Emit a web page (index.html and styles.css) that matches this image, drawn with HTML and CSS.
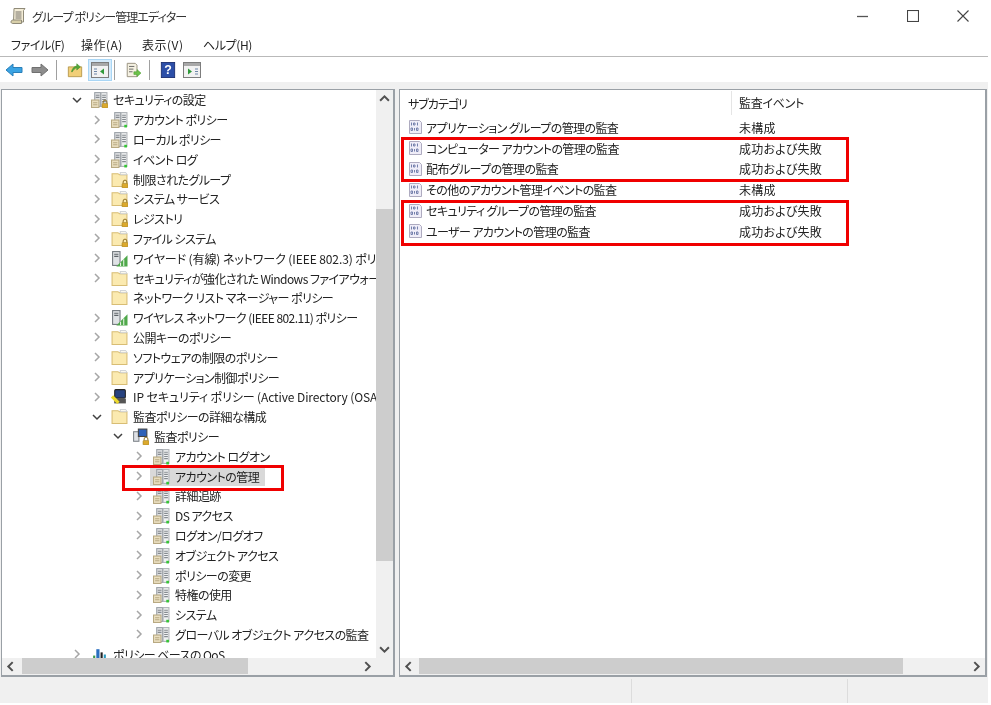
FILE: index.html
```html
<!DOCTYPE html>
<html lang="ja">
<head>
    <meta charset="UTF-8">
    <title>グループ ポリシー管理エディター</title>
    <link rel="stylesheet" href="styles.css">
</head>
<body>

    <!-- Shared icons -->
    <svg class="icon-defs" aria-hidden="true">
        <symbol id="chev-right" viewBox="0 0 10 10"><path d="M3 1l4 4-4 4" fill="none" stroke="#a6a6a6" stroke-width="1.5"/></symbol>
        <symbol id="chev-down" viewBox="0 0 10 10"><path d="M1 3l4 4 4-4" fill="none" stroke="#404040" stroke-width="1.5"/></symbol>
        <symbol id="policy" viewBox="0 0 16 16">
            <rect x="3.500" y="1.500" width="5.500" height="13" fill="#dfe1e3" stroke="#9aa0a6"/>
            <rect x="9.500" y="1.500" width="5.500" height="13" fill="#eef0f1" stroke="#aeb2b6"/>
            <path d="M4.500 4h3.500M4.500 6h3.500M10.500 4h3.500M10.500 6h3.500M10.500 8h3.500M10.500 10h3.500" stroke="#868b90"/>
            <rect x=".5" y="8.500" width="7" height="7" fill="#eadfc0" stroke="#b8a982"/>
            <path d="M2 11h4M2 13h4" stroke="#b8a982"/>
            <rect x="12.500" y="13" width="2.500" height="2.500" fill="#35c435"/>
        </symbol>
        <symbol id="folder" viewBox="0 0 16 16">
            <path d="M1 14.500v-12h5.500l1.500 1h7v11z" fill="#fbeab0" stroke="#d8bd74"/>
            <path d="M8.500 1.500h5.500l1 2h-6z" fill="#fffdf4" stroke="#c4c7cc" stroke-width=".8"/>
        </symbol>
        <symbol id="lock" viewBox="0 0 16 16">
            <path d="M9.500 10V8a2.500 2.500 0 0 1 5 0v2" fill="none" stroke="#8c6d1f" stroke-width="1.300"/>
            <rect x="8" y="10" width="8" height="6" rx="1" fill="#dba92e" stroke="#9c7a22" stroke-width=".7"/>
        </symbol>
        <symbol id="audit" viewBox="0 0 16 16">
            <path d="M1.500 1.500h10l2 2v11h-12z" fill="#efedf8" stroke="#aeabc0"/>
            <path d="M3.500 3.500v3M5.500 4H7v2H5.500zM9.500 3.500v3M3 9h1.500v2.500H3zM6.500 9v2.500M8.500 9H10v2.500H8.500z" fill="none" stroke="#7480ac"/>
        </symbol>
        <symbol id="wireless" viewBox="0 0 16 16">
            <rect x="1.500" y="1.500" width="7" height="13" fill="#dfe2e5" stroke="#6f757b"/>
            <path d="M3 4h4M3 6h4" stroke="#5f656a"/>
            <path d="M5 15.500L15.500 5v10.500z" fill="#4fa84a"/>
            <path d="M9 15v-3M12 15V9" stroke="#e8f4e4"/>
        </symbol>
    </svg>

    <div class="window">

        <!-- Title bar -->
        <header class="titlebar">
            <svg class="app-icon" viewBox="0 0 18 18">
                <path d="M5 1.500h11l-1.500 2v11.500h-10z" fill="#f3ecd6" stroke="#8f8a78"/>
                <path d="M2 15c0-1.500 1-2 2.500-2h8v3.500H4c-1 0-2-.5-2-1.500z" fill="#d8cfa9" stroke="#8f8a78"/>
                <path d="M6.500 5h6M6.500 7h6M6.500 9h6M6.500 11h6" stroke="#77736a"/>
            </svg>
            <span class="title-text">グループ ポリシー管理エディター</span>
            <div class="window-btns">
                <svg viewBox="0 0 12 12"><path d="M0 6.500h11" stroke="#555" stroke-width="1.300"/></svg>
                <svg viewBox="0 0 12 12"><rect x=".5" y=".5" width="11" height="11" fill="none" stroke="#444" stroke-width="1.100"/></svg>
                <svg viewBox="0 0 12 12"><path d="M.5.500l11 11M11.500.500l-11 11" stroke="#444" stroke-width="1.100"/></svg>
            </div>
        </header>

        <!-- Menu -->
        <nav class="menubar">
            <span>ファイル(F)</span>
            <span class="menu-wide">操作(A)</span>
            <span class="menu-wide">表示(V)</span>
            <span>ヘルプ(H)</span>
        </nav>

        <!-- Toolbar -->
        <div class="toolbar">
            <span class="tool"><svg viewBox="0 0 18 14"><path d="M8 1L1 7l7 6V9.500h9v-5H8z" fill="#3aa3e3" stroke="#2a7fb8"/></svg></span>
            <span class="tool"><svg viewBox="0 0 18 14"><path d="M10 1l7 6-7 6V9.500H1v-5h9z" fill="#8d8d8d" stroke="#707070"/></svg></span>
            <span class="tool-sep"></span>
            <span class="tool"><svg viewBox="0 0 18 18"><path d="M1.500 16.500v-11h15v11z" fill="#f1cf78" stroke="#b5964a"/><path d="M5 11c1-4 3-6 6-6.500V2l4 3.500-4 3.500V6.500C9 7 7 9 6 11z" fill="#53a83a" stroke="#3c8a28" stroke-width=".6"/></svg></span>
            <span class="tool tool-on"><svg viewBox="0 0 18 16"><rect x=".5" y=".5" width="17" height="15" fill="#f2f2f2" stroke="#7d7d7d"/><rect x="1" y="1" width="16" height="3" fill="#a8a8a8"/><path d="M3 7h3M3 9.500h3M3 12h3" stroke="#6c86a8"/><path d="M13 6.500v6L9 9.500z" fill="#2f9a3a"/></svg></span>
            <span class="tool-sep"></span>
            <span class="tool"><svg viewBox="0 0 18 18"><path d="M2.500 1.500h9l2 2v13h-11z" fill="#f5f1e2" stroke="#908a78"/><path d="M4.500 5h6M4.500 8h5M4.500 11h4" stroke="#5c5c5c"/><path d="M10 11h3.500V8.500L18 12.500l-4.500 4V14H10z" fill="#6cc24a" stroke="#4b9a30" stroke-width=".6"/></svg></span>
            <span class="tool-sep"></span>
            <span class="tool tool-help"><svg viewBox="0 0 16 18"><rect x=".5" y=".5" width="15" height="17" fill="#2c4fa8" stroke="#1b2f70"/><text x="8" y="14" class="help-mark">?</text></svg></span>
            <span class="tool"><svg viewBox="0 0 18 16"><rect x=".5" y=".5" width="17" height="15" fill="#f2f2f2" stroke="#7d7d7d"/><rect x="1" y="1" width="16" height="3" fill="#a8a8a8"/><path d="M12 7h3M12 9.500h3M12 12h3" stroke="#6c86a8"/><path d="M5 6.500v6L9 9.500z" fill="#2f9a3a"/></svg></span>
        </div>

        <div class="strip"></div>

        <!-- Panes -->
        <main class="panes">

            <section class="pane tree-pane">
                <div class="pane-body">
                    <ul class="tree">
                        <li class="row lv0"><svg class="chev"><use href="#chev-down"/></svg><span class="ico"><svg><use href="#policy"/></svg><svg><use href="#lock"/></svg></span><span>セキュリティの設定</span></li>
                        <li class="row lv1"><svg class="chev"><use href="#chev-right"/></svg><span class="ico"><svg><use href="#policy"/></svg></span><span>アカウント ポリシー</span></li>
                        <li class="row lv1"><svg class="chev"><use href="#chev-right"/></svg><span class="ico"><svg><use href="#policy"/></svg></span><span>ローカル ポリシー</span></li>
                        <li class="row lv1"><svg class="chev"><use href="#chev-right"/></svg><span class="ico"><svg><use href="#policy"/></svg></span><span>イベント ログ</span></li>
                        <li class="row lv1"><svg class="chev"><use href="#chev-right"/></svg><span class="ico"><svg><use href="#folder"/></svg><svg><use href="#lock"/></svg></span><span>制限されたグループ</span></li>
                        <li class="row lv1"><svg class="chev"><use href="#chev-right"/></svg><span class="ico"><svg><use href="#folder"/></svg><svg><use href="#lock"/></svg></span><span>システム サービス</span></li>
                        <li class="row lv1"><svg class="chev"><use href="#chev-right"/></svg><span class="ico"><svg><use href="#folder"/></svg><svg><use href="#lock"/></svg></span><span>レジストリ</span></li>
                        <li class="row lv1"><svg class="chev"><use href="#chev-right"/></svg><span class="ico"><svg><use href="#folder"/></svg><svg><use href="#lock"/></svg></span><span>ファイル システム</span></li>
                        <li class="row lv1 row-wide"><svg class="chev"><use href="#chev-right"/></svg><span class="ico"><svg><use href="#wireless"/></svg></span><span>ワイヤード (有線) ネットワーク (IEEE 802.3) ポリシー</span></li>
                        <li class="row lv1"><svg class="chev"><use href="#chev-right"/></svg><span class="ico"><svg><use href="#folder"/></svg></span><span>セキュリティが強化された Windows ファイアウォール</span></li>
                        <li class="row lv1"><span class="chev"></span><span class="ico"><svg><use href="#folder"/></svg></span><span>ネットワーク リスト マネージャー ポリシー</span></li>
                        <li class="row lv1"><svg class="chev"><use href="#chev-right"/></svg><span class="ico"><svg><use href="#wireless"/></svg></span><span>ワイヤレス ネットワーク (IEEE 802.11) ポリシー</span></li>
                        <li class="row lv1"><svg class="chev"><use href="#chev-right"/></svg><span class="ico"><svg><use href="#folder"/></svg></span><span>公開キーのポリシー</span></li>
                        <li class="row lv1"><svg class="chev"><use href="#chev-right"/></svg><span class="ico"><svg><use href="#folder"/></svg></span><span>ソフトウェアの制限のポリシー</span></li>
                        <li class="row lv1"><svg class="chev"><use href="#chev-right"/></svg><span class="ico"><svg><use href="#folder"/></svg></span><span>アプリケーション制御ポリシー</span></li>
                        <li class="row lv1 row-wide"><svg class="chev"><use href="#chev-right"/></svg><span class="ico"><svg viewBox="0 0 16 16"><rect x="3.500" y="1.500" width="10" height="8" rx="1" fill="#27427f" stroke="#222"/><rect x="3" y="10" width="11" height="4.500" fill="#555"/><path d="M1 8l6 6" stroke="#ecd92f" stroke-width="3"/></svg></span><span>IP セキュリティ ポリシー (Active Directory (OSA</span></li>
                        <li class="row lv1"><svg class="chev"><use href="#chev-down"/></svg><span class="ico"><svg><use href="#folder"/></svg></span><span>監査ポリシーの詳細な構成</span></li>
                        <li class="row lv2"><svg class="chev"><use href="#chev-down"/></svg><span class="ico"><svg viewBox="0 0 16 16"><rect x="1.500" y="3.500" width="5" height="9" fill="#dfe2e6" stroke="#7d8389"/><rect x="6" y="1" width="8" height="7" fill="#2f62b8" stroke="#444"/></svg><svg><use href="#lock"/></svg></span><span>監査ポリシー</span></li>
                        <li class="row lv3"><svg class="chev"><use href="#chev-right"/></svg><span class="ico"><svg><use href="#policy"/></svg></span><span>アカウント ログオン</span></li>
                        <li class="row lv3"><svg class="chev"><use href="#chev-right"/></svg><span class="picked"><span class="ico"><svg><use href="#policy"/></svg></span><span>アカウントの管理</span></span></li>
                        <li class="row lv3"><svg class="chev"><use href="#chev-right"/></svg><span class="ico"><svg><use href="#policy"/></svg></span><span>詳細追跡</span></li>
                        <li class="row lv3"><svg class="chev"><use href="#chev-right"/></svg><span class="ico"><svg><use href="#policy"/></svg></span><span>DS アクセス</span></li>
                        <li class="row lv3"><svg class="chev"><use href="#chev-right"/></svg><span class="ico"><svg><use href="#policy"/></svg></span><span>ログオン/ログオフ</span></li>
                        <li class="row lv3"><svg class="chev"><use href="#chev-right"/></svg><span class="ico"><svg><use href="#policy"/></svg></span><span>オブジェクト アクセス</span></li>
                        <li class="row lv3"><svg class="chev"><use href="#chev-right"/></svg><span class="ico"><svg><use href="#policy"/></svg></span><span>ポリシーの変更</span></li>
                        <li class="row lv3"><svg class="chev"><use href="#chev-right"/></svg><span class="ico"><svg><use href="#policy"/></svg></span><span>特権の使用</span></li>
                        <li class="row lv3"><svg class="chev"><use href="#chev-right"/></svg><span class="ico"><svg><use href="#policy"/></svg></span><span>システム</span></li>
                        <li class="row lv3"><svg class="chev"><use href="#chev-right"/></svg><span class="ico"><svg><use href="#policy"/></svg></span><span>グローバル オブジェクト アクセスの監査</span></li>
                        <li class="row lv0"><svg class="chev"><use href="#chev-right"/></svg><span class="ico"><svg viewBox="0 0 16 16"><path d="M2 15V9h2v6z" fill="#3a9a4a"/><path d="M5 15V3h3v12z" fill="#2a6fc0"/><path d="M9 15V6h2v9z" fill="#222"/><path d="M12 15V8h2v7z" fill="#2a9ac0"/></svg></span><span>ポリシー ベースの QoS</span></li>
                    </ul>
                    <div class="vbar">
                        <svg class="arrow" viewBox="0 0 10 10"><path d="M1 7l4-4 4 4" fill="none" stroke="#505050" stroke-width="1.800"/></svg>
                        <div class="vtrack"><div class="vthumb"></div></div>
                        <svg class="arrow" viewBox="0 0 10 10"><path d="M1 3l4 4 4-4" fill="none" stroke="#505050" stroke-width="1.800"/></svg>
                    </div>
                </div>
                <div class="hbar">
                    <svg class="arrow" viewBox="0 0 10 10"><path d="M7 1L3 5l4 4" fill="none" stroke="#505050" stroke-width="1.800"/></svg>
                    <div class="htrack"><div class="hthumb thumb-left"></div></div>
                    <svg class="arrow" viewBox="0 0 10 10"><path d="M3 1l4 4-4 4" fill="none" stroke="#505050" stroke-width="1.800"/></svg>
                    <span class="corner"></span>
                </div>
            </section>

            <section class="pane list-pane">
                <div class="pane-body list-body">
                    <div class="list-head">
                        <span class="col-name">サブカテゴリ</span>
                        <span class="col-event">監査イベント</span>
                    </div>
                    <ul class="list">
                        <li class="item"><span class="col-name"><svg class="ico-audit"><use href="#audit"/></svg>アプリケーション グループの管理の監査</span><span class="col-event">未構成</span></li>
                        <li class="item"><span class="col-name"><svg class="ico-audit"><use href="#audit"/></svg>コンピューター アカウントの管理の監査</span><span class="col-event">成功および失敗</span></li>
                        <li class="item"><span class="col-name"><svg class="ico-audit"><use href="#audit"/></svg>配布グループの管理の監査</span><span class="col-event">成功および失敗</span></li>
                        <li class="item"><span class="col-name"><svg class="ico-audit"><use href="#audit"/></svg>その他のアカウント管理イベントの監査</span><span class="col-event">未構成</span></li>
                        <li class="item"><span class="col-name"><svg class="ico-audit"><use href="#audit"/></svg>セキュリティ グループの管理の監査</span><span class="col-event">成功および失敗</span></li>
                        <li class="item"><span class="col-name"><svg class="ico-audit"><use href="#audit"/></svg>ユーザー アカウントの管理の監査</span><span class="col-event">成功および失敗</span></li>
                    </ul>
                </div>
                <div class="hbar">
                    <svg class="arrow" viewBox="0 0 10 10"><path d="M7 1L3 5l4 4" fill="none" stroke="#505050" stroke-width="1.800"/></svg>
                    <div class="htrack"><div class="hthumb thumb-right"></div></div>
                    <svg class="arrow" viewBox="0 0 10 10"><path d="M3 1l4 4-4 4" fill="none" stroke="#505050" stroke-width="1.800"/></svg>
                </div>
            </section>
        </main>

        <!-- Status bar -->
        <footer class="statusbar">
            <span class="status-a"></span>
            <span class="status-b"></span>
            <span class="status-c"></span>
        </footer>
    </div>

    <!-- Red annotation boxes -->
    <div class="mark mark-tree"></div>
    <div class="mark mark-list1"></div>
    <div class="mark mark-list2"></div>

</body>
</html>
```

FILE: styles.css
```css
/* Page */
body {
    margin: 0;
    width: 991px;
    height: 705px;
    overflow: hidden;
    background-color: white;
    color: #222;
    font-family: "Noto Sans CJK JP", "Noto Sans", sans-serif;
    font-size: 12px;
    font-feature-settings: "palt";
    position: relative;
}
ul {
    list-style: none;
    margin: 0;
    padding: 0;
}
.icon-defs {
    position: absolute;
    width: 0;
    height: 0;
}
.window {
    width: 988px;
    height: 703px;
    display: flex;
    flex-direction: column;
    background-color: white;
    filter: blur(0.35px);
}

/* Title bar */
.titlebar {
    height: 32px;
    display: flex;
    align-items: center;
    padding-left: 9px;
    flex: none;
}
.app-icon {
    width: 18px;
    height: 18px;
    margin-right: 5px;
}
.title-text {
    color: #333;
    letter-spacing: -0.9px;
}
.window-btns {
    margin-left: auto;
    display: flex;
    gap: 38px;
    padding-right: 19px;
}
.window-btns svg {
    width: 12px;
    height: 12px;
}

/* Menu */
.menubar {
    height: 24px;
    flex: none;
    display: grid;
    grid-template-columns: 70px 61px 61px 60px;
    align-items: center;
    padding-left: 11px;
    border-bottom: 1px solid #b9b9b9;
    letter-spacing: -0.4px;
}
.menu-wide {
    letter-spacing: 0.5px;
}

/* Toolbar */
.toolbar {
    height: 25px;
    flex: none;
    display: flex;
    align-items: center;
    padding-left: 5px;
    padding-top: 1px;
    box-sizing: border-box;
}
.tool {
    display: flex;
    align-items: center;
    justify-content: center;
    width: 18px;
    height: 22px;
    margin-right: 8px;
}
.tool svg {
    width: 18px;
    height: 16px;
}
.tool-on {
    width: 24px;
    background-color: #d5ebfb;
    box-shadow: inset 0 0 0 1px #a9d6f5;
    margin-right: 3px;
    margin-left: -4px;
}
.tool-help {
    margin-right: 6px;
}
.tool-sep {
    width: 1px;
    height: 20px;
    background-color: #a0a0a0;
    margin: 0 9px 0 -1px;
}
.help-mark {
    fill: white;
    font-size: 14px;
    font-weight: bold;
    font-family: "Liberation Sans", sans-serif;
    text-anchor: middle;
}
.strip {
    height: 7px;
    flex: none;
    background-color: #f0f0f0;
}

/* Panes */
.panes {
    height: 588px;
    flex: none;
    display: flex;
    gap: 4px;
    padding-left: 1px;
    background-color: #f0f0f0;
}
.pane {
    display: flex;
    flex-direction: column;
    background-color: white;
    border: 1px solid #9aa0a6;
    border-bottom-width: 2px;
    border-right-width: 2px;
    box-sizing: border-box;
}
.tree-pane {
    width: 394px;
}
.list-pane {
    width: 588px;
}
.pane-body {
    flex: 1;
    display: flex;
    min-height: 0;
    overflow: hidden;
}

/* Tree */
.tree {
    flex: 1;
    min-width: 0;
    overflow: hidden;
    letter-spacing: -0.55px;
}
.row {
    height: 19.8px;
    display: flex;
    align-items: center;
    white-space: nowrap;
}
.row-wide {
    letter-spacing: -0.1px;
}
.lv0 { padding-left: 70px; }
.lv1 { padding-left: 90px; }
.lv2 { padding-left: 111px; }
.lv3 { padding-left: 132px; }
.chev {
    width: 10px;
    height: 10px;
    flex: none;
    margin-right: 9px;
}
.ico {
    width: 17px;
    height: 17px;
    flex: none;
    position: relative;
    margin-right: 5px;
}
.ico svg {
    width: 17px;
    height: 17px;
    display: block;
}
.ico svg + svg {
    position: absolute;
    left: 5px;
    top: 5px;
    width: 12px;
    height: 12px;
}
.picked {
    display: flex;
    align-items: center;
    height: 100%;
    background-color: #d9d9d9;
    padding-right: 6px;
    margin-left: -3px;
    padding-left: 3px;
}

/* Scrollbars */
.vbar {
    width: 17px;
    flex: none;
    background-color: #f0f0f0;
    display: flex;
    flex-direction: column;
}
.vtrack {
    flex: 1;
}
.vthumb {
    margin-top: 102px;
    height: 352px;
    background-color: #cdcdcd;
}
.arrow {
    width: 17px;
    height: 17px;
    flex: none;
    padding: 3px;
    box-sizing: border-box;
}
.hbar {
    height: 17px;
    flex: none;
    display: flex;
    background-color: #f0f0f0;
}
.htrack {
    flex: 1;
    min-width: 0;
}
.hthumb {
    height: 16px;
    background-color: #cdcdcd;
}
.thumb-left {
    width: 226px;
    margin-left: 3px;
}
.thumb-right {
    width: 484px;
    margin-left: 2px;
}
.corner {
    width: 17px;
    flex: none;
}

/* List */
.list-body {
    flex-direction: column;
}
.list-head {
    height: 26px;
    flex: none;
    display: flex;
    align-items: center;
}
.list-head .col-name {
    padding-left: 8px;
    letter-spacing: -1px;
}
.list-head .col-event {
    border-left: 1px solid #e5e5e5;
    line-height: 24px;
    padding-left: 7px;
    letter-spacing: -0.3px;
}
.list {
    padding-top: 1px;
}
.item {
    height: 20.8px;
    display: flex;
    align-items: center;
}
.col-name {
    width: 331px;
    flex: none;
    display: flex;
    align-items: center;
    padding-left: 8px;
    box-sizing: border-box;
    letter-spacing: -0.6px;
}
.col-event {
    padding-left: 8px;
    letter-spacing: 0.2px;
}
.ico-audit {
    width: 16px;
    height: 16px;
    margin-right: 2px;
    flex: none;
}

/* Status bar */
.statusbar {
    flex: 1;
    display: flex;
    background-color: #f0f0f0;
    padding-top: 2px;
}
.status-a {
    width: 631px;
    border-right: 1px solid #dcdcdc;
}
.status-b {
    width: 215px;
    border-right: 1px solid #dcdcdc;
}

/* Red annotation boxes */
.mark {
    position: absolute;
    border: 3px solid #f00000;
    box-sizing: border-box;
}
.mark-tree {
    left: 122px;
    top: 465px;
    width: 162px;
    height: 26px;
}
.mark-list1 {
    left: 401px;
    top: 137px;
    width: 448px;
    height: 45px;
}
.mark-list2 {
    left: 401px;
    top: 200px;
    width: 448px;
    height: 46px;
}
```
